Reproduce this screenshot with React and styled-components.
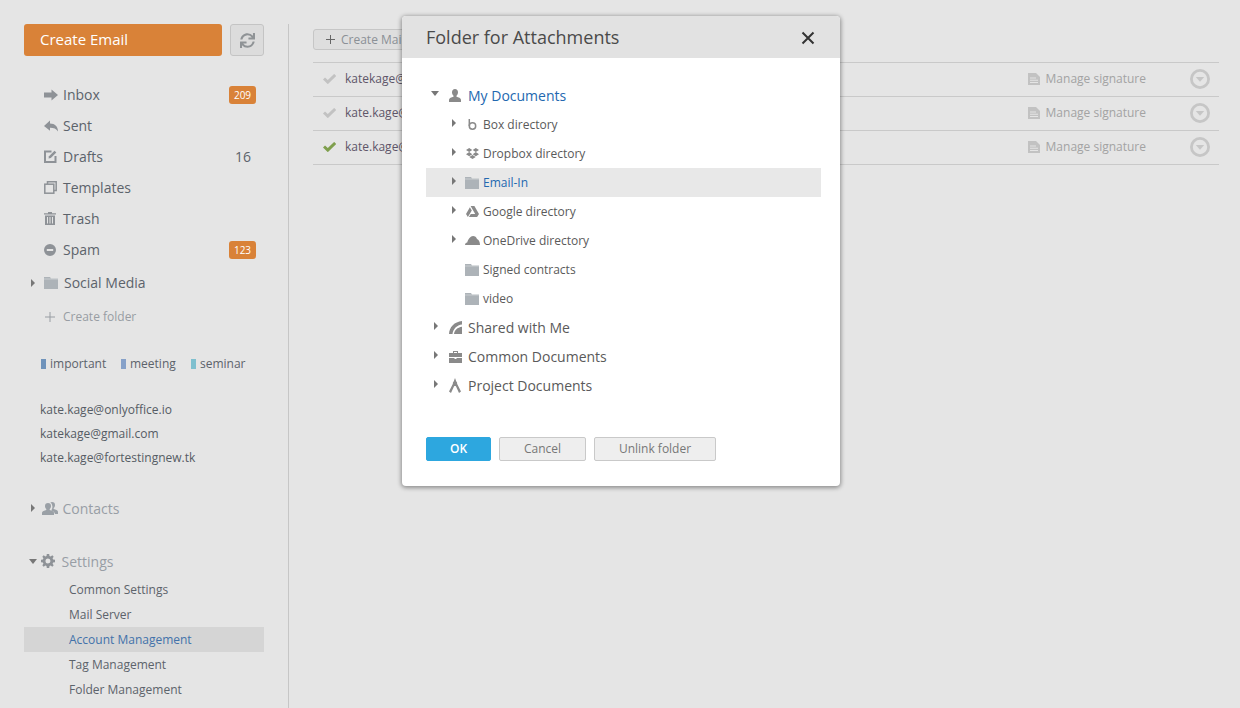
import React from 'react';
import styled, { createGlobalStyle } from 'styled-components';
import { FaSync } from 'react-icons/fa';

const GlobalStyle = createGlobalStyle`
  html, body {
    margin: 0;
    padding: 0;
    height: 100%;
    overflow: hidden;
    background: #e5e5e5;
  }
  * { box-sizing: border-box; }
  body { font-family: "Open Sans", "Liberation Sans", sans-serif; }
`;

const Page = styled.div`
  position: relative;
  display: flex;
  width: 1240px;
  height: 708px;
  padding-top: 24px;
  overflow: hidden;
  background: #e5e5e5;
`;

const Sidebar = styled.aside`
  width: 289px;
  height: 684px;
  flex: none;
  padding-left: 24px;
  border-right: 1px solid #c6c6c6;
`;

const SidebarInner = styled.div`
  width: 240px;
`;

const TopButtons = styled.div`
  display: flex;
  gap: 8px;
  margin-bottom: 23px;
`;

const CreateButton = styled.div`
  width: 198px;
  height: 32px;
  padding-left: 16px;
  border-radius: 3px;
  background: #d98238;
  color: #fff;
  font-size: 15px;
  line-height: 31px;
`;

const RefreshButton = styled.div`
  width: 34px;
  height: 32px;
  display: flex;
  align-items: center;
  justify-content: center;
  border: 1px solid #c4c4c4;
  border-radius: 3px;
  background: #dcdcdc;
  color: #8f9396;
`;

const NavRow = styled.div`
  height: 31px;
  display: flex;
  align-items: center;
  padding-left: 20px;
  padding-right: 8px;
  color: #5c636b;
  font-size: 14px;
`;

const NavIcon = styled.span`
  width: 19px;
  display: flex;
  flex: none;
  color: #8e9297;
`;

const Count = styled.span`
  margin-left: auto;
  margin-right: 5px;
  color: #5c636b;
`;

const Badge = styled.span`
  margin-left: auto;
  width: 27px;
  height: 18px;
  border-radius: 3px;
  background: #d98238;
  color: #fff;
  font-size: 10px;
  line-height: 18px;
  text-align: center;
`;

const Arrow = styled.span`
  width: 0;
  height: 0;
  flex: none;
  border-style: solid;
  border-width: ${p => (p.$open ? '5px 4.5px 0' : '4px 0 4px 4.5px')};
  border-color: ${p => (p.$open ? '#777 transparent transparent' : 'transparent transparent transparent #777')};
`;

const FolderRow = styled.div`
  height: 35px;
  display: flex;
  align-items: center;
  padding-left: 7px;
  color: #5c636b;
  font-size: 14px;

  ${Arrow} { margin-right: 8.5px; }
  svg { margin-right: 6.5px; }
`;

const CreateFolder = styled.div`
  height: 33px;
  display: flex;
  align-items: center;
  padding-left: 21px;
  color: #989da3;
  font-size: 12px;

  svg { margin-right: 8px; }
`;

const Tags = styled.div`
  display: flex;
  padding-left: 17px;
  margin-top: 14px;
  height: 33px;
  align-items: center;
`;

const Tag = styled.span`
  display: flex;
  align-items: center;
  width: ${p => p.$w}px;
  color: #5c636b;
  font-size: 12px;

  &::before {
    content: '';
    width: 5px;
    height: 10px;
    margin-right: 4px;
    background: ${p => p.$color};
  }
`;

const Accounts = styled.div`
  margin-top: 18px;
  padding-left: 16px;
`;

const Account = styled.div`
  height: 24px;
  color: #555c64;
  font-size: 12px;
  line-height: 24px;
`;

const SectionRow = styled.div`
  height: 24px;
  margin-top: ${p => p.$top}px;
  display: flex;
  align-items: center;
  padding-left: ${p => (p.$open ? 5 : 7)}px;
  color: #989ea5;
  font-size: 14px;

  svg { margin-left: ${p => (p.$open ? 4 : 6.5)}px; margin-right: ${p => (p.$open ? 6.5 : 5)}px; }
`;

const SubMenu = styled.div`
  margin-top: 4px;
`;

const SubItem = styled.div`
  height: 25px;
  padding-left: 45px;
  background: ${p => (p.$active ? '#d5d5d5' : 'transparent')};
  color: ${p => (p.$active ? '#4272aa' : '#5c636b')};
  font-size: 12px;
  line-height: 25px;
`;

const Main = styled.main`
  flex: 1;
  padding: 5px 21px 0 24px;
`;

const AddButton = styled.div`
  width: 130px;
  height: 21px;
  display: flex;
  align-items: center;
  padding-left: 12px;
  margin-bottom: 12px;
  border: 1px solid #c6c6c6;
  border-radius: 3px;
  background: #dedede;
  color: #8b9096;
  font-size: 12px;

  svg { margin-right: 6px; }
`;

const MailRows = styled.div`
  border-top: 1px solid #c9c9c9;
`;

const MailRow = styled.div`
  height: 34px;
  display: flex;
  align-items: center;
  padding: 0 9px 2px 10px;
  border-bottom: 1px solid #c9c9c9;
  font-size: 12px;
`;

const MailAddress = styled.span`
  margin-left: 9px;
  color: #5e5669;
`;

const Signature = styled.span`
  margin-left: auto;
  display: flex;
  align-items: center;
  gap: 6px;
  color: #a3a3a3;
`;

const RowMenu = styled.span`
  display: flex;
  margin-left: 44px;
`;

const Modal = styled.div`
  position: absolute;
  left: 402px;
  top: 16px;
  width: 438px;
  height: 470px;
  border-radius: 4px;
  overflow: hidden;
  background: #fff;
  box-shadow: 0 1px 4px 1px rgba(0, 0, 0, 0.38);
`;

const ModalHeader = styled.div`
  height: 42px;
  display: flex;
  align-items: center;
  justify-content: space-between;
  padding: 0 25px 0 24px;
  background: #e2e2e2;
  color: #4a4a4a;
  font-size: 18px;
`;

const CloseButton = styled.span`
  display: flex;
  position: relative;
  top: 1px;
  color: #333;
`;

const Tree = styled.div`
  padding: 23px 19px 0 24px;
`;

const TreeRow = styled.div`
  height: 29px;
  display: flex;
  align-items: center;
  padding-left: ${p => (p.$child ? 26 : 5)}px;
  background: ${p => (p.$selected ? '#e8e8e8' : 'transparent')};
  color: ${p => (p.$blue ? '#2368b0' : '#5a5a5a')};
  font-size: ${p => (p.$child ? 12 : 14)}px;
`;

const ArrowSlot = styled.span`
  width: ${p => (p.$child ? 13 : 18)}px;
  flex: none;
  display: flex;
  position: relative;
  top: -2px;
  padding-left: ${p => (p.$child || p.$open ? 0 : 3)}px;
`;

const TreeIcon = styled.span`
  width: ${p => (p.$child ? 18 : 19)}px;
  display: flex;
  flex: none;
  color: #8a8a8a;
`;

const ModalButtons = styled.div`
  display: flex;
  gap: 8px;
  padding: 37px 0 0 24px;
`;

const ModalButton = styled.div`
  width: ${p => p.$w}px;
  height: 24px;
  border-radius: 2px;
  border: 1px solid ${p => (p.$primary ? '#2da7df' : '#c9c9c9')};
  background: ${p => (p.$primary ? '#2da7df' : '#eeeeee')};
  color: ${p => (p.$primary ? '#fff' : '#777')};
  font-size: 12px;
  font-weight: ${p => (p.$primary ? 600 : 400)};
  line-height: 22px;
  text-align: center;
`;

const FolderIcon = ({ w = 14, h = 12 }) => (
  <svg width={w} height={h} viewBox="0 0 14 12" fill="#adb3b8">
    <path d="M0 0h6l1 1.500h7V12H0z" />
    <path d="M0 2h14" stroke="#e5e8ea" strokeWidth=".5" />
  </svg>
);

const navIcons = {
  inbox: <svg width="14" height="12" viewBox="0 0 14 12" fill="currentColor"><path d="M0 3.500h7.500V0.500L14 6l-6.500 5.500v-3H0z" /></svg>,
  sent: <svg width="14" height="12" viewBox="0 0 14 12" fill="currentColor"><path d="M6 0.500v3c5 0 8 3 8 8-1.800-2.800-4-3.700-8-3.700v3L0 6z" /></svg>,
  drafts: <svg width="13" height="13" viewBox="0 0 13 13" fill="none" stroke="currentColor"><path d="M7.500 1.500H1v10.500h10.500V6" strokeWidth="2" /><path d="M4.500 8.500l.5-2.300L10.500.7l1.800 1.800-5.500 5.500z" fill="currentColor" stroke="none" /></svg>,
  templates: <svg width="13" height="13" viewBox="0 0 13 13" fill="none" stroke="currentColor" strokeWidth="1.500"><rect x=".8" y="3.200" width="9" height="9" /><path d="M3.500 3V.8h8.700v8.700H10" /></svg>,
  trash: <svg width="12" height="13" viewBox="0 0 12 13" fill="currentColor"><path d="M4 0h4v1.200h4v1.300H0V1.200h4zM1 3.500h10V13H1zM3 5v6.500h1V5zm2.500 0v6.500h1V5zM8 5v6.500h1V5z" fillRule="evenodd" /></svg>,
  spam: <svg width="12" height="12" viewBox="0 0 12 12" fill="currentColor"><path d="M6 0a6 6 0 1 1 0 12A6 6 0 0 1 6 0zM2.800 4.900v2.200h6.400V4.900z" fillRule="evenodd" /></svg>,
};

const CheckIcon = ({ color }) => (
  <svg width="13" height="10" viewBox="0 0 13 10" fill="none" stroke={color} strokeWidth="3"><path d="M1 4.500l3.800 3.600L12.200 1" /></svg>
);

const DocIcon = () => (
  <svg width="12" height="12" viewBox="0 0 12 12" fill="#c2c2c2">
    <path d="M0 0h8l4 4v8H0zM2 4.500v1h6v-1zm0 2.300v1h8v-1zm0 2.300v1h8v-1z" fillRule="evenodd" />
  </svg>
);

const CircleMenu = () => (
  <svg width="20" height="20" viewBox="0 0 20 20">
    <circle cx="10" cy="10" r="8.600" fill="none" stroke="#c6c6c6" strokeWidth="2.800" />
    <path d="M5.800 8h8.400L10 12.800z" fill="#c6c6c6" />
  </svg>
);

const treeIcons = {
  person: <svg width="12" height="13" viewBox="0 0 12 13" fill="currentColor"><path d="M6 0c1.900 0 3 1.300 3 3.200 0 1.500-.6 2.800-1.500 3.500v1.100c1.900.6 4.500 1.300 4.500 3V13H0v-2.200c0-1.700 2.600-2.400 4.500-3V6.700C3.600 6 3 4.700 3 3.200 3 1.300 4.100 0 6 0z" /></svg>,
  box: <svg width="11" height="11" viewBox="0 0 11 11" fill="none" stroke="currentColor" strokeWidth="1.500" style={{ marginLeft: 2 }}><circle cx="5.500" cy="7" r="3.200" /><path d="M2.300 7V0" /></svg>,
  dropbox: <svg width="13" height="11" viewBox="0 0 13 11" fill="currentColor" style={{ marginLeft: 1 }}><path d="M3.200 0L6.300 2 3.200 4.100 0 2zM9.800 0L13 2 9.800 4.100 6.700 2zM0 6.200l3.200-2.100 3.100 2.100-3.100 2zM9.800 4.100L13 6.200l-3.200 2-3.100-2zM3.300 8.900l3.200-2 3.200 2-3.200 2.100z" /></svg>,
  drive: <svg width="13" height="12" viewBox="0 0 13 12" fill="currentColor" style={{ marginLeft: 1 }}><path d="M4.600 0h3.800l4.600 8H9.200zM3.900 1.200l1.900 3.300L1.900 11 0 8zM2.900 11l1.900-3h8.200l-1.900 3z" /><path d="M6.500 4.800L8.300 8H4.700z" fill="#fff" /></svg>,
  cloud: <svg width="15" height="9" viewBox="0 0 15 9" fill="currentColor"><path d="M0 9c0-1.400.9-2.400 2.200-2.600C3.200 3 5.500 0 8 0c2 0 3.400 1.200 4 3 1.700.5 3 3 3 6z" /></svg>,
  shared: <svg width="13" height="13" viewBox="0 0 13 13" fill="currentColor"><path d="M0 13C.3 6 5.500.8 13 0v3.500C8 4.100 4 8 3.500 13zM5 13c.3-3.600 3.400-6.700 8-7.300V13z" /></svg>,
  common: <svg width="13" height="12" viewBox="0 0 13 12" fill="currentColor"><path d="M4 0h5v2h4v4H0V2h4zm1 1v1h3V1zM0 7h5.500v1h2V7H13v5H0z" fillRule="evenodd" /></svg>,
  project: <svg width="12" height="15" viewBox="0 0 12 15" fill="currentColor"><path d="M6 0l1.300 3.500c.7.500 1 1.300.8 2.200L12 13.500 10 15 6.800 8c-.5.200-1.100.2-1.600 0L2 15 0 13.500l3.900-7.800c-.2-.9.100-1.700.8-2.200z" /></svg>,
};

const navItems = [
  { key: 'inbox', label: 'Inbox', badge: '209' },
  { key: 'sent', label: 'Sent' },
  { key: 'drafts', label: 'Drafts', count: '16' },
  { key: 'templates', label: 'Templates' },
  { key: 'trash', label: 'Trash' },
  { key: 'spam', label: 'Spam', badge: '123' },
];

const mailRows = [
  { address: 'katekage@gmail.com', color: '#c2c2c2' },
  { address: 'kate.kage@onlyoffice.io', color: '#c2c2c2' },
  { address: 'kate.kage@fortestingnew.tk', color: '#7f9f4d' },
];

const treeRows = [
  { label: 'My Documents', icon: treeIcons.person, open: true, blue: true },
  { label: 'Box directory', icon: treeIcons.box, child: true, arrow: true },
  { label: 'Dropbox directory', icon: treeIcons.dropbox, child: true, arrow: true },
  { label: 'Email-In', icon: <FolderIcon />, child: true, arrow: true, selected: true, blue: true },
  { label: 'Google directory', icon: treeIcons.drive, child: true, arrow: true },
  { label: 'OneDrive directory', icon: treeIcons.cloud, child: true, arrow: true },
  { label: 'Signed contracts', icon: <FolderIcon />, child: true },
  { label: 'video', icon: <FolderIcon />, child: true },
  { label: 'Shared with Me', icon: treeIcons.shared, arrow: true },
  { label: 'Common Documents', icon: treeIcons.common, arrow: true },
  { label: 'Project Documents', icon: treeIcons.project, arrow: true },
];

export default function App() {
  return (
    <Page>
      <GlobalStyle />
      <Sidebar>
        <SidebarInner>
          <TopButtons>
            <CreateButton>Create Email</CreateButton>
            <RefreshButton><FaSync size={15} /></RefreshButton>
          </TopButtons>

          {navItems.map(item => (
            <NavRow key={item.key}>
              <NavIcon>{navIcons[item.key]}</NavIcon>
              {item.label}
              {item.badge && <Badge>{item.badge}</Badge>}
              {item.count && <Count>{item.count}</Count>}
            </NavRow>
          ))}

          <FolderRow>
            <Arrow />
            <FolderIcon />
            Social Media
          </FolderRow>
          <CreateFolder>
            <svg width="10" height="10" viewBox="0 0 10 10" stroke="#989da3"><path d="M5 0v10M0 5h10" /></svg>
            Create folder
          </CreateFolder>

          <Tags>
            <Tag $w={80} $color="#6f93bb">important</Tag>
            <Tag $w={70} $color="#86a1c9">meeting</Tag>
            <Tag $w={60} $color="#7fc0cf">seminar</Tag>
          </Tags>

          <Accounts>
            <Account>kate.kage@onlyoffice.io</Account>
            <Account>katekage@gmail.com</Account>
            <Account>kate.kage@fortestingnew.tk</Account>
          </Accounts>

          <SectionRow $top={26}>
            <Arrow />
            <svg width="16" height="13" viewBox="0 0 16 13" fill="#9aa0a6">
              <path d="M6 1c2 0 3 1.300 3 3 0 1.300-.5 2.400-1.300 3v1c1.800.5 4.300 1.200 4.300 2.700V13H0v-2.300C0 9.200 2.500 8.500 4.300 8V7C3.500 6.400 3 5.300 3 4c0-1.700 1-3 3-3z" />
              <path d="M10 0c2 0 3 1.300 3 3 0 1.300-.5 2.400-1.300 3v1c1.800.5 4.300 1.200 4.300 2.700V12h-3c-.3-2-2-3-3.800-3.600 1-1.300 1.600-3 1-5C9.900 2 9.200 1 8.300.6 8.800.2 9.300 0 10 0z" />
            </svg>
            Contacts
          </SectionRow>

          <SectionRow $top={29} $open>
            <Arrow $open />
            <svg width="14" height="14" viewBox="0 0 14 14" fill="#8e9297">
              <path d="M5.800 0h2.400l.3 1.900 1.200.5L11.300 1.300 12.700 2.700l-1.100 1.600.5 1.200 1.900.3v2.400l-1.900.3-.5 1.200 1.100 1.600-1.400 1.400-1.600-1.100-1.200.5L8.200 14H5.800l-.3-1.900-1.200-.5-1.600 1.100-1.400-1.400 1.100-1.600-.5-1.200L0 8.200V5.800l1.900-.3.500-1.200L1.300 2.700 2.700 1.300l1.600 1.100 1.200-.5zM7 4.500a2.500 2.500 0 1 0 0 5 2.500 2.500 0 0 0 0-5z" fillRule="evenodd" />
            </svg>
            Settings
          </SectionRow>

          <SubMenu>
            <SubItem>Common Settings</SubItem>
            <SubItem>Mail Server</SubItem>
            <SubItem $active>Account Management</SubItem>
            <SubItem>Tag Management</SubItem>
            <SubItem>Folder Management</SubItem>
          </SubMenu>
        </SidebarInner>
      </Sidebar>

      <Main>
        <AddButton>
          <svg width="9" height="9" viewBox="0 0 9 9" stroke="#666"><path d="M4.500 0v9M0 4.500h9" /></svg>
          Create Mailbox
        </AddButton>
        <MailRows>
          {mailRows.map(row => (
            <MailRow key={row.address}>
              <CheckIcon color={row.color} />
              <MailAddress>{row.address}</MailAddress>
              <Signature><DocIcon />Manage signature</Signature>
              <RowMenu><CircleMenu /></RowMenu>
            </MailRow>
          ))}
        </MailRows>
      </Main>

      <Modal>
        <ModalHeader>
          Folder for Attachments
          <CloseButton>
            <svg width="14" height="14" viewBox="0 0 14 14" stroke="currentColor" strokeWidth="2"><path d="M1.500 1.500l11 11M12.500 1.500l-11 11" /></svg>
          </CloseButton>
        </ModalHeader>
        <Tree>
          {treeRows.map(row => (
            <TreeRow key={row.label} $child={row.child} $selected={row.selected} $blue={row.blue}>
              <ArrowSlot $child={row.child} $open={row.open}>
                {(row.arrow || row.open) && <Arrow $open={row.open} />}
              </ArrowSlot>
              <TreeIcon $child={row.child}>{row.icon}</TreeIcon>
              {row.label}
            </TreeRow>
          ))}
        </Tree>
        <ModalButtons>
          <ModalButton $primary $w={65}>OK</ModalButton>
          <ModalButton $w={87}>Cancel</ModalButton>
          <ModalButton $w={122}>Unlink folder</ModalButton>
        </ModalButtons>
      </Modal>
    </Page>
  );
}
